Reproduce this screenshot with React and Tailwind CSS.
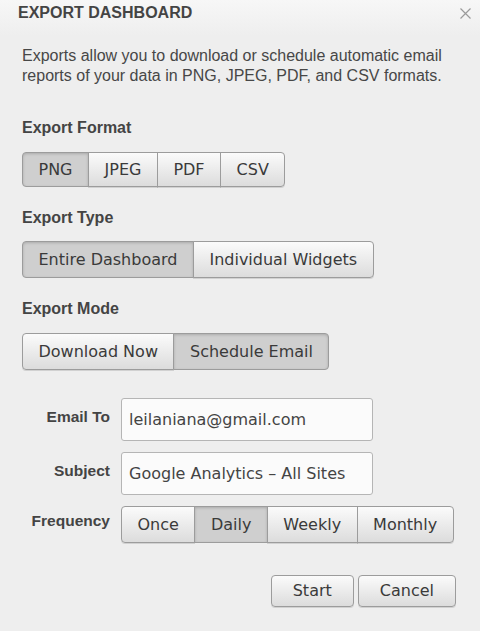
import React, { useState } from 'react';

const btnFont = { fontFamily: '"DejaVu Sans", Verdana, sans-serif' };

const SegButton = ({ label, active, first, last, onClick, h }) => (
  <button
    onClick={onClick}
    className={`${h} px-[15.5px] border border-[#9c9c9c] text-[16px] leading-none text-[#3a3a3a] ${first ? 'rounded-l-[4px]' : '-ml-px'} ${last ? 'rounded-r-[4px]' : ''} ${
      active
        ? 'bg-[#cfcfcf] shadow-[inset_0_1px_3px_rgba(0,0,0,0.18)] border-[#8f8f8f]'
        : 'bg-gradient-to-b from-[#fbfbfb] to-[#dcdcdc] shadow-[0_1px_0_rgba(0,0,0,0.12)]'
    }`}
    style={btnFont}
  >
    {label}
  </button>
);

const SegGroup = ({ options, value, onChange, h = 'h-[37px]' }) => (
  <div className="flex">
    {options.map((opt, i) => (
      <SegButton
        key={opt}
        label={opt}
        h={h}
        active={opt === value}
        first={i === 0}
        last={i === options.length - 1}
        onClick={() => onChange(opt)}
      />
    ))}
  </div>
);

const Label = ({ children, className = '' }) => (
  <div className={`text-[16px] leading-[20px] font-bold text-[#444] ${className}`}>{children}</div>
);

export default function App() {
  const [format, setFormat] = useState('PNG');
  const [type, setType] = useState('Entire Dashboard');
  const [mode, setMode] = useState('Schedule Email');
  const [freq, setFreq] = useState('Daily');

  return (
    <div
      className="w-[480px] h-[631px] bg-[#eeeeee] relative overflow-hidden"
      style={{ fontFamily: '"Liberation Sans", Arial, sans-serif' }}
    >
      {/* Header */}
      <div className="h-[36px] bg-gradient-to-b from-[#f7f7f7] to-[#eeeeee] pt-[3px] pl-[18px]">
        <div className="text-[16px] leading-[20px] font-bold text-[#444]">EXPORT DASHBOARD</div>
      </div>
      <button className="absolute top-[8px] right-[9px] w-[11px] h-[11px] text-[#9a9a9a]">
        <svg viewBox="0 0 11 11" width="11" height="11" fill="none" stroke="currentColor" strokeWidth="1.2">
          <path d="M0.5 0.5 L10.5 10.5 M10.5 0.5 L0.5 10.5" />
        </svg>
      </button>

      <div className="pl-[22px] pr-[20px]">
        <p className="mt-[10px] text-[16px] leading-[20px] text-[#474747]">
          Exports allow you to download or schedule automatic email reports of your data in PNG, JPEG, PDF, and CSV formats.
        </p>

        <Label className="mt-[32px]">Export Format</Label>
        <div className="mt-[14px]">
          <SegGroup options={['PNG', 'JPEG', 'PDF', 'CSV']} value={format} onChange={setFormat} h="h-[35px]" />
        </div>

        <Label className="mt-[21px]">Export Type</Label>
        <div className="mt-[13px]">
          <SegGroup options={['Entire Dashboard', 'Individual Widgets']} value={type} onChange={setType} />
        </div>

        <Label className="mt-[21px]">Export Mode</Label>
        <div className="mt-[14px]">
          <SegGroup options={['Download Now', 'Schedule Email']} value={mode} onChange={setMode} />
        </div>
      </div>

      {/* Schedule form */}
      <div className="pl-[22px] mt-[28px] flex flex-col gap-[11px]">
        <div className="flex items-start gap-[11px]">
          <div className="w-[88px] pt-[9px] text-right text-[15.5px] leading-[20px] font-bold text-[#444]">Email To</div>
          <input
            defaultValue="leilaniana@gmail.com"
            className="w-[252px] h-[43px] px-[7px] bg-[#fbfbfb] border border-[#b5b5b5] rounded-[3px] text-[16px] text-[#444] outline-none"
            style={btnFont}
          />
        </div>
        <div className="flex items-start gap-[11px]">
          <div className="w-[88px] pt-[9px] text-right text-[15.5px] leading-[20px] font-bold text-[#444]">Subject</div>
          <input
            defaultValue="Google Analytics – All Sites"
            className="w-[252px] h-[43px] px-[7px] bg-[#fbfbfb] border border-[#b5b5b5] rounded-[3px] text-[16px] text-[#444] outline-none"
            style={btnFont}
          />
        </div>
        <div className="flex items-start gap-[11px]">
          <div className="w-[88px] pt-[5px] text-right text-[15.5px] leading-[20px] font-bold text-[#444]">Frequency</div>
          <SegGroup options={['Once', 'Daily', 'Weekly', 'Monthly']} value={freq} onChange={setFreq} />
        </div>
      </div>

      {/* Footer buttons */}
      <div className="mt-[32px] pr-[24px] flex justify-end gap-[4px]">
        {['Start', 'Cancel'].map((b) => (
          <button
            key={b}
            className="h-[32px] px-[21px] border border-[#9c9c9c] rounded-[4px] bg-gradient-to-b from-[#fbfbfb] to-[#dcdcdc] shadow-[0_1px_0_rgba(0,0,0,0.12)] text-[16px] leading-none text-[#3a3a3a]"
            style={btnFont}
          >
            {b}
          </button>
        ))}
      </div>
    </div>
  );
}
